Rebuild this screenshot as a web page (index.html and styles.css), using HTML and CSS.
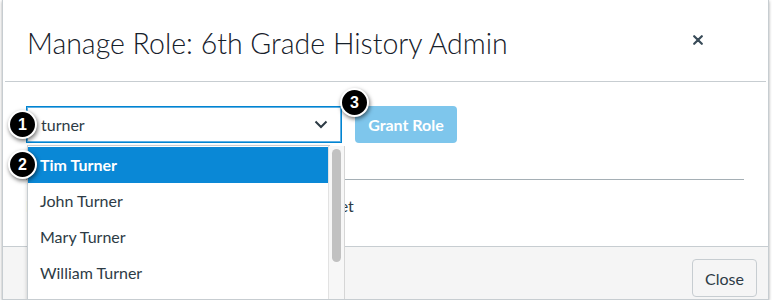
FILE: index.html
```html
<!DOCTYPE html>
<html lang="en">
<head>
    <meta charset="UTF-8">
    <meta name="viewport" content="width=device-width, initial-scale=1.0">
    <title>Manage Role</title>
    <link rel="stylesheet" href="styles.css">
</head>
<body>
    <div class="modal">
        <div class="modal-header">
            <h1>Manage Role: 6th Grade History Admin</h1>
            <button class="close-x" aria-label="Close">
                <svg width="10" height="10" viewBox="0 0 10 10">
                    <path d="M1.2 1.2 L8.8 8.8 M8.8 1.2 L1.2 8.8" stroke="#394b58" stroke-width="2.2" stroke-linecap="round"/>
                </svg>
            </button>
        </div>

        <div class="modal-body">
            <div class="grant-row">
                <div class="user-select">
                    <span>turner</span>
                    <svg width="14" height="9" viewBox="0 0 14 9">
                        <path d="M1.5 1.5 L7 7 L12.5 1.5" fill="none" stroke="#2d3b45" stroke-width="2"/>
                    </svg>
                </div>
                <button class="grant-btn">Grant Role</button>
            </div>
            <hr class="divider">
            <p class="empty-note">No users have been assigned to this role just yet</p>
        </div>

        <div class="modal-footer">
            <button class="close-btn">Close</button>
        </div>

        <ul class="user-list">
            <li class="active">Tim Turner</li>
            <li>John Turner</li>
            <li>Mary Turner</li>
            <li>William Turner</li>
        </ul>
        <div class="scroll-track"><div class="scroll-thumb"></div></div>

        <span class="badge badge-1">1</span>
        <span class="badge badge-2">2</span>
        <span class="badge badge-3">3</span>
    </div>
</body>
</html>
```

FILE: styles.css
```css
body{
    margin: 0;
    background: #fff;
    font-family: Lato, "Noto Sans", sans-serif;
    color: #2d3b45;
}

.modal{
    position: relative;
    margin-left: 2px;
    width: 765px;
    height: 299px;
    border: 1px solid #c7cdd1;
    border-top: none;
    box-shadow: 0 1px 3px rgba(0,0,0,0.35);
    overflow: hidden;
    background: #fff;
}

.modal-header{
    height: 81px;
    padding: 0 63px 0 22px;
    display: flex;
    align-items: center;
    justify-content: space-between;
    border-bottom: 1px solid #c7cdd1;
    margin: 0 2px;
}

.modal-header h1{
    margin: 2px 0 0 0;
    font-size: 30px;
    font-weight: 300;
    color: #16202a;
    transform: scaleX(0.95);
    transform-origin: left center;
    white-space: nowrap;
}

.close-x{
    border: none;
    background: none;
    padding: 0;
    width: 10px;
    height: 10px;
    margin-top: -1px;
    display: flex;
}

.modal-body{
    height: 140px;
    padding: 24px 24px 0 23px;
}

.grant-row{
    display: flex;
    gap: 13px;
}

.user-select{
    box-sizing: border-box;
    width: 316px;
    height: 37px;
    border: 1px solid #0084d1;
    box-shadow: inset 0 0 0 1px #5fb0e4;
    display: flex;
    align-items: center;
    justify-content: space-between;
    padding: 0 13px 0 14px;
    font-size: 16px;
}

.grant-btn{
    width: 102px;
    height: 37px;
    border: none;
    border-radius: 4px;
    background: #7ec6ec;
    color: #fff;
    font-family: Lato, "Noto Sans", sans-serif;
    font-size: 16px;
    font-weight: bold;
}

.divider{
    margin: 36px 0 0 0;
    width: 718px;
    border: none;
    border-top: 1px solid #a5afb5;
}

.empty-note{
    margin: 16px 0 0 0;
    font-size: 16px;
    letter-spacing: -0.2px;
}

.modal-footer{
    height: 53px;
    border-top: 1px solid #c7cdd1;
    background: #f5f5f5;
    display: flex;
    justify-content: flex-end;
    padding: 12px 11px 0 0;
    box-sizing: border-box;
}

.close-btn{
    width: 65px;
    height: 38px;
    border: 1px solid #c7cdd1;
    border-radius: 4px;
    background: #f5f5f5;
    color: #2d3b45;
    font-family: Lato, "Noto Sans", sans-serif;
    font-size: 16px;
}

.user-list{
    position: absolute;
    left: 24px;
    top: 145px;
    width: 301px;
    margin: 0;
    padding: 1px 0 0 0;
    list-style: none;
    background: #fff;
    border: 1px solid #c7cdd1;
    box-shadow: 0 2px 4px rgba(0,0,0,0.2);
    height: 200px;
}

.user-list li{
    height: 36px;
    line-height: 35px;
    padding-left: 12px;
    font-size: 16px;
    color: #2d3b45;
}

.user-list li.active{
    background: #0a88d6;
    color: #fff;
    font-weight: bold;
}

.scroll-track{
    position: absolute;
    left: 325px;
    top: 146px;
    width: 15px;
    height: 200px;
    background: #f7f7f7;
    border-left: 1px solid #e2e2e2;
    border-right: 1px solid #d6d6d6;
}

.scroll-thumb{
    margin: 3px 0 0 3px;
    width: 9px;
    height: 113px;
    border-radius: 5px;
    background: #c1c1c1;
}

.badge{
    position: absolute;
    width: 25px;
    height: 25px;
    border: 2px solid #fff;
    border-radius: 50%;
    background: #000;
    color: #fff;
    font-family: "Liberation Sans", Arial, sans-serif;
    font-weight: bold;
    font-size: 16px;
    line-height: 25px;
    text-align: center;
    box-shadow: 1px 2px 4px rgba(0,0,0,0.55);
}

.badge-1{ left: 5px; top: 110px; }
.badge-2{ left: 5px; top: 150px; }
.badge-3{ left: 337px; top: 88px; }
```
